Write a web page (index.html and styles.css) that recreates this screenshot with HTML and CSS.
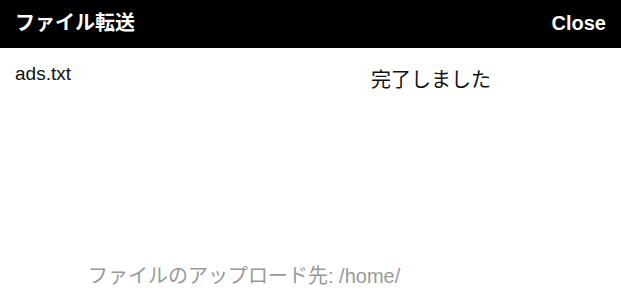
FILE: index.html
```html
<!DOCTYPE html>
<html lang="ja">
<head>
<meta charset="utf-8">
<title>ファイル転送</title>
<link rel="stylesheet" href="styles.css">
</head>
<body>
<div class="dialog">
  <header class="bar">
    <h1 class="title">ファイル転送</h1>
    <button class="close" type="button">Close</button>
  </header>
  <main class="content">
    <div class="row">
      <span class="file">ads.txt</span>
      <span class="status">完了しました</span>
    </div>
    <p class="dest">ファイルのアップロード先: /home/</p>
  </main>
</div>
</body>
</html>
```
FILE: styles.css
```css
html, body {
  margin: 0;
  padding: 0;
  background: #fff;
}
body {
  font-family: "Liberation Sans", "Noto Sans CJK JP", sans-serif;
  width: 621px;
  height: 294px;
  overflow: hidden;
}
.dialog {
  display: flex;
  flex-direction: column;
  height: 294px;
}
.bar {
  height: 48px;
  background: #000;
  color: #fff;
  display: flex;
  align-items: center;
  justify-content: space-between;
  padding: 0 15px 3px;
  box-sizing: border-box;
}
.title {
  margin: 0;
  font-size: 20px;
  font-weight: bold;
  line-height: 1;
}
.close {
  background: none;
  border: 0;
  padding: 0;
  color: #fff;
  font-family: "Liberation Sans", sans-serif;
  font-size: 20px;
  font-weight: bold;
  line-height: 1;
}
.content {
  flex: 1;
  display: flex;
  flex-direction: column;
  justify-content: space-between;
  padding: 14px 15px 6px;
}
.row {
  display: grid;
  grid-template-columns: 356px 1fr;
  align-items: start;
}
.file {
  font-size: 19px;
  line-height: 24px;
  color: #111;
}
.status {
  font-size: 20px;
  line-height: 24px;
  color: #111;
  padding-top: 6px;
}
.dest {
  margin: 0 0 0 73px;
  font-size: 20px;
  line-height: 24px;
  color: #999;
}
```
